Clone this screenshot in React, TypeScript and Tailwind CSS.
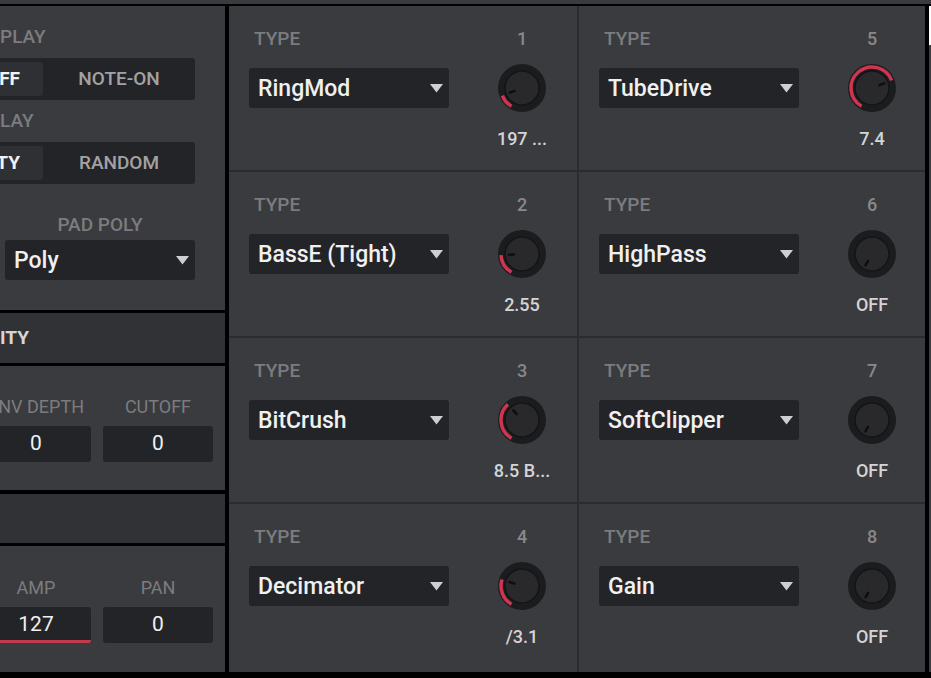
import React from 'react';

type FxSlot = {
  slot: number;
  type: string;
  value: string;
  level: number;
};

// row-major order: left column holds slots 1-4, right column 5-8
const SLOTS: FxSlot[] = [
  { slot: 1, type: 'RingMod', value: '197 ...', level: 0.13 },
  { slot: 5, type: 'TubeDrive', value: '7.4', level: 0.73 },
  { slot: 2, type: 'BassE (Tight)', value: '2.55', level: 0.19 },
  { slot: 6, type: 'HighPass', value: 'OFF', level: 0 },
  { slot: 3, type: 'BitCrush', value: '8.5 B...', level: 0.36 },
  { slot: 7, type: 'SoftClipper', value: 'OFF', level: 0 },
  { slot: 4, type: 'Decimator', value: '/3.1', level: 0.26 },
  { slot: 8, type: 'Gain', value: 'OFF', level: 0 },
];

const Caret = () => (
  <svg width="13" height="9" viewBox="0 0 13 9">
    <polygon points="0,0 13,0 6.5,8.5" fill="#cfcfd1" />
  </svg>
);

// knob sweeps 300 degrees, starting at roughly 7 o'clock
const Knob = ({ level }: { level: number }) => {
  const start = -150;
  const end = start + 300 * level;
  const pt = (deg: number, r: number) => {
    const a = (deg * Math.PI) / 180;
    return [25 + r * Math.sin(a), 25 - r * Math.cos(a)];
  };
  const [sx, sy] = pt(start, 21);
  const [ex, ey] = pt(end, 21);
  const [ix1, iy1] = pt(end, 8);
  const [ix2, iy2] = pt(end, 13);
  const large = end - start > 180 ? 1 : 0;

  return (
    <svg width="50" height="50" viewBox="0 0 50 50">
      <circle cx="25" cy="25" r="24" fill="#1b1c1e" />
      {level > 0 && (
        <path
          d={`M${sx} ${sy} A21 21 0 ${large} 1 ${ex} ${ey}`}
          stroke="#cf3450"
          strokeWidth="3.5"
          fill="none"
        />
      )}
      <circle cx="25" cy="25" r="17" fill="#29292c" stroke="#141516" strokeWidth="1.5" />
      <line x1={ix1} y1={iy1} x2={ix2} y2={iy2} stroke="#0e0e0f" strokeWidth="2.5" strokeLinecap="round" />
    </svg>
  );
};

const FxCell = ({ fx }: { fx: FxSlot }) => (
  <div className="bg-[#3a3b3f] flex">
    <div className="pl-[20px] w-[240px]">
      <div className="pl-[5px] pt-[22px] h-[44px] text-[19px] leading-[22px] font-medium text-[#7c7c7e]">TYPE</div>
      <div className="mt-[18px] w-[200px] h-[40px] bg-[#232427] rounded-[3px] flex items-center justify-between pl-[9px] pr-[6px]">
        <span className="pt-[3px] text-[23px] font-medium text-[#f0f0f0] whitespace-nowrap">{fx.type}</span>
        <Caret />
      </div>
    </div>
    <div className="w-[106px] flex flex-col items-center">
      <div className="pt-[22px] h-[44px] text-[18px] leading-[22px] font-medium text-[#88888a]">{fx.slot}</div>
      <div className="mt-[13px]">
        <Knob level={fx.level} />
      </div>
      <div className="mt-[15px] text-[18px] leading-[22px] font-medium text-[#d4d4d6] whitespace-nowrap">{fx.value}</div>
    </div>
  </div>
);

const Segmented = ({ active, other }: { active: string; other: string }) => (
  <div className="-ml-[53px] w-[248px] h-[42px] bg-[#232427] rounded-[3px] flex pl-[4px] py-[4px]">
    <div className="w-[92px] bg-[#2f3034] rounded-[3px] flex items-center justify-end pr-[23px] text-[19px] font-bold text-[#f2f2f2]">
      {active}
    </div>
    <div className="flex-1 flex items-center justify-center text-[19px] font-medium text-[#a2a2a4]">{other}</div>
  </div>
);

const ValueBox = ({ value, accent }: { value: string; accent?: boolean }) => (
  <div
    className={`w-[110px] h-[36px] bg-[#232427] rounded-[3px] flex items-center justify-center text-[21px] text-[#f0f0f0] ${
      accent ? 'border-b-[3px] border-[#c43a4d] pt-[3px]' : ''
    }`}
  >
    {value}
  </div>
);

const PairRow = ({
  labels,
  values,
  top,
  accentFirst,
}: {
  labels: [string, string];
  values: [string, string];
  top: string;
  accentFirst?: boolean;
}) => (
  <div className={`-ml-[19px] flex gap-[12px] ${top}`}>
    {[0, 1].map((i) => (
      <div key={i} className="w-[110px] flex flex-col items-center">
        <div className="h-[22px] text-[18px] leading-[22px] text-[#7c7c7e] whitespace-nowrap">{labels[i]}</div>
        <div className="mt-[8px]">
          <ValueBox value={values[i]} accent={accentFirst && i === 0} />
        </div>
      </div>
    ))}
  </div>
);

const LeftPanel = () => (
  <div className="w-[225px] flex flex-col gap-[3px] overflow-hidden">
    <section className="h-[304px] bg-[#3a3b3f]">
      <div className="pt-[20px] h-[42px] text-[19px] leading-[22px] font-medium text-[#7c7c7e]">PLAY</div>
      <div className="mt-[10px]">
        <Segmented active="FF" other="NOTE-ON" />
      </div>
      <div className="mt-[10px] h-[22px] text-[19px] leading-[22px] font-medium text-[#7c7c7e]">LAY</div>
      <div className="mt-[10px]">
        <Segmented active="TY" other="RANDOM" />
      </div>
      <div className="mt-[30px] w-[200px] text-center h-[22px] text-[19px] leading-[22px] font-medium text-[#7c7c7e]">PAD POLY</div>
      <div className="mt-[4px] ml-[5px] w-[190px] h-[40px] bg-[#232427] rounded-[3px] flex items-center justify-between pl-[9px] pr-[6px]">
        <span className="pt-[3px] text-[23px] font-medium text-[#f0f0f0]">Poly</span>
        <Caret />
      </div>
    </section>
    <div className="h-[50px] bg-[#313236] flex items-center text-[19px] font-bold text-[#d6d6d8]">ITY</div>
    <section className="h-[124px] bg-[#3a3b3f]">
      <PairRow labels={['ENV DEPTH', 'CUTOFF']} values={['0', '0']} top="pt-[30px]" />
    </section>
    <div className="h-[49px] mt-[1px] bg-[#313236]" />
    <section className="h-[126px] bg-[#3a3b3f]">
      <PairRow labels={['AMP', 'PAN']} values={['127', '0']} top="pt-[31px]" accentFirst />
    </section>
  </div>
);

export default function App() {
  return (
    <div className="w-[931px] h-[678px] bg-black overflow-hidden" style={{ fontFamily: 'Roboto, "Noto Sans", sans-serif' }}>
      <div className="h-[4px] bg-[#3a3b3f]" />
      <div className="h-[2px]" />
      <div className="flex h-[666px]">
        <LeftPanel />
        <div className="w-[4px]" />
        <div className="w-[696px] h-[666px] grid grid-cols-[348px_346px] grid-rows-[164px_164px_164px_168px] gap-[2px] bg-[#2b2c30]">
          {SLOTS.map((fx) => (
            <FxCell key={fx.slot} fx={fx} />
          ))}
        </div>
        <div className="w-[4px]" />
        <div className="w-[2px] bg-[#3d3e42] flex flex-col">
          <div className="h-[39px] bg-white" />
        </div>
      </div>
    </div>
  );
}
